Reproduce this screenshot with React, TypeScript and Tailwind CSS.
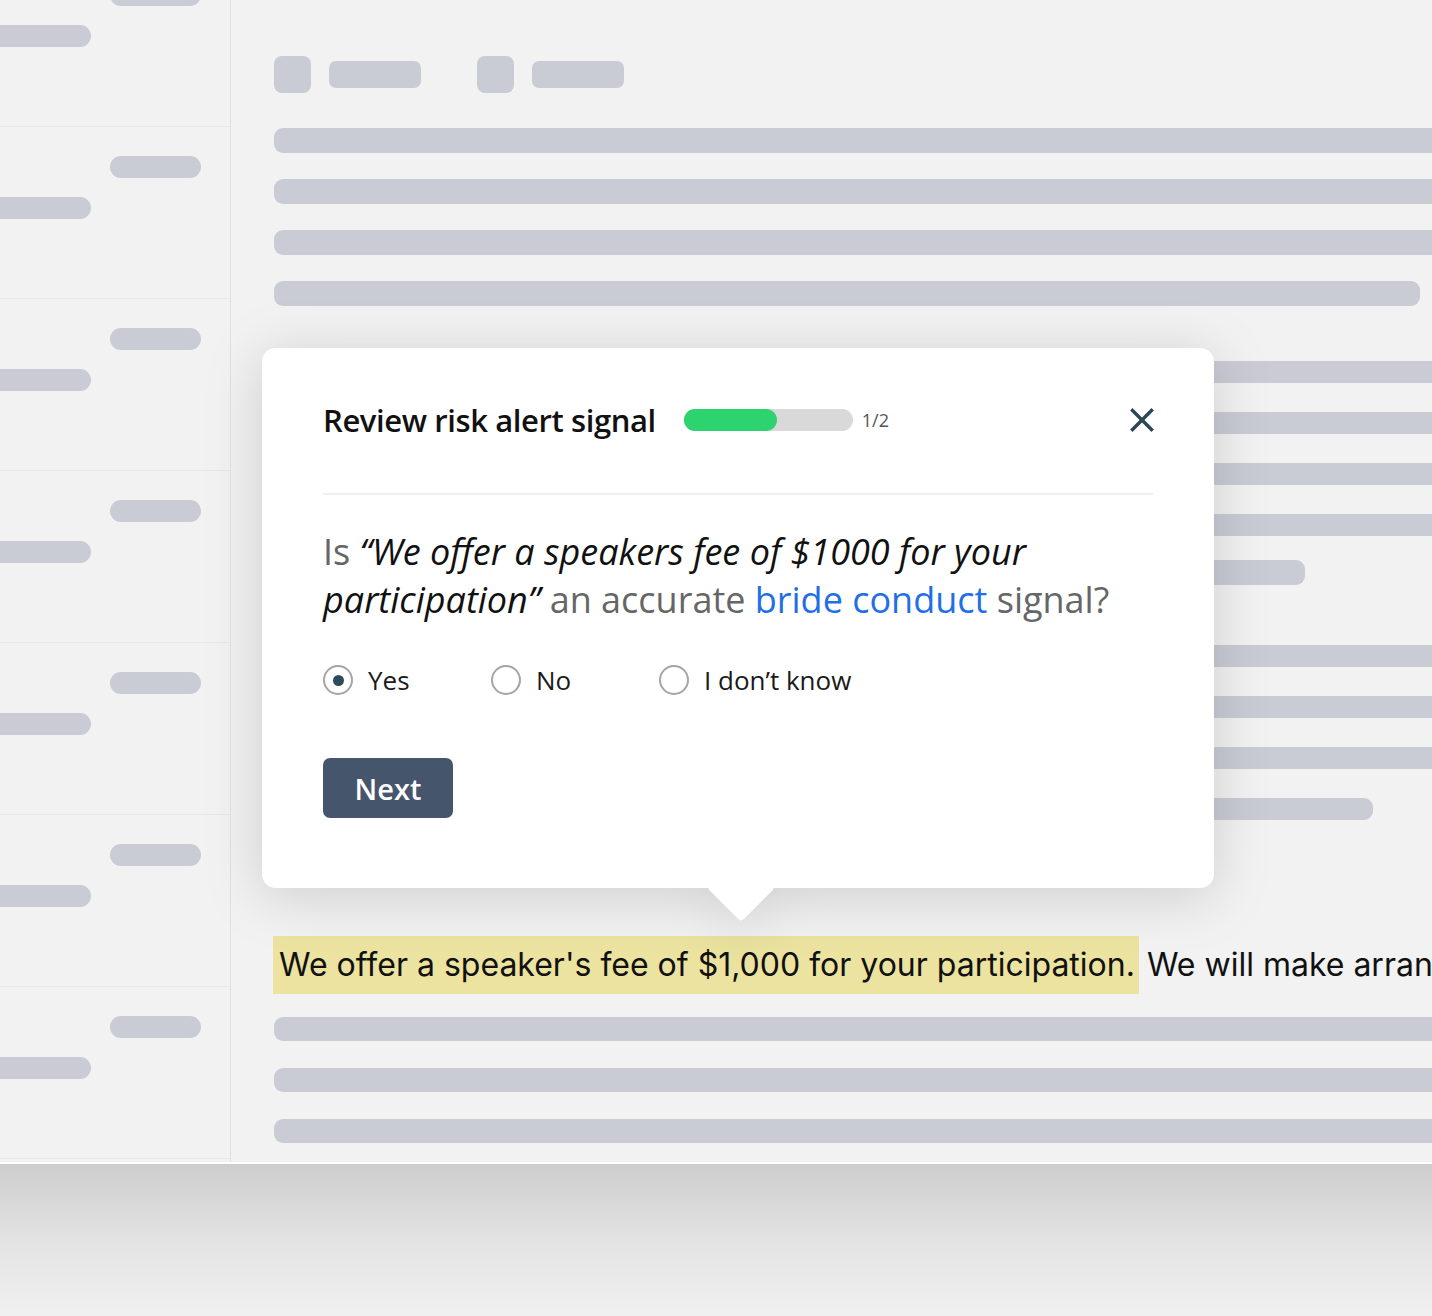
const sidebarRows = [0, 1, 2, 3, 4, 5, 6, 7];

function Bar({ className }: { className: string }) {
  return <div className={`bg-[#c9ccd4] shrink-0 ${className}`} />;
}

function Radio({ label, checked }: { label: string; checked?: boolean }) {
  return (
    <label className="w-[168px] flex items-center shrink-0 whitespace-nowrap">
      <span className="w-[30px] h-[30px] rounded-full border-2 border-[#a5a5a5] flex items-center justify-center shrink-0">
        {checked && <span className="w-[11px] h-[11px] rounded-full bg-[#2d4a5e]" />}
      </span>
      <span className="ml-[15px] text-[26px] leading-none text-[#1a1a1a]">{label}</span>
    </label>
  );
}

function ReviewPopover() {
  return (
    <div className="absolute left-[262px] top-[348px] drop-shadow-[0_8px_28px_rgba(0,0,0,0.15)]">
      <div className="relative w-[952px] h-[540px] bg-white rounded-[14px] px-[61px] pt-[50px] font-['Open_Sans',sans-serif]">
        <div className="flex items-center h-[44px]">
          <h2 className="text-[31px] font-semibold tracking-[-0.4px] text-[#111] leading-none">Review risk alert signal</h2>
          <div className="ml-[28px] w-[169px] h-[22px] rounded-full bg-[#d9d9d9]">
            <div className="w-[93px] h-full rounded-full bg-[#2dd36f]" />
          </div>
          <span className="ml-[9px] text-[18px] text-[#555]">1/2</span>
          <button className="ml-auto -mr-[1px] w-[24px] h-[24px] flex items-center justify-center">
            <svg width="24" height="24" viewBox="0 0 24 24" fill="none" stroke="#2d4654" strokeWidth="3.4" strokeLinecap="square">
              <path d="M2.5 2.5 21.5 21.5" />
              <path d="M21.5 2.5 2.5 21.5" />
            </svg>
          </button>
        </div>
        <div className="mt-[51px] h-[2px] bg-[#efefef]" />
        <p className="mt-[33px] text-[36px] leading-[48px] text-[#666]">
          Is <em className="text-[#111]">“We offer a speakers fee of $1000 for your participation”</em> an accurate{' '}
          <span className="text-[#1f6fe6]">bride conduct</span> signal?
        </p>
        <div className="mt-[41px] flex items-center h-[30px]">
          <Radio label="Yes" checked />
          <Radio label="No" />
          <Radio label="I don’t know" />
        </div>
        <button className="mt-[63px] w-[130px] h-[60px] rounded-[7px] bg-[#45556b] text-white text-[29px] font-semibold leading-none">
          Next
        </button>
      </div>
      <div className="absolute left-[455px] top-[516px] w-[48px] h-[48px] rotate-45 rounded-[4px] bg-white" />
      <div className="absolute left-[420px] top-[510px] w-[120px] h-[30px] bg-white" />
    </div>
  );
}

export default function App() {
  return (
    <div className="relative w-[1432px] h-[1316px] overflow-hidden bg-[#f0f0f0]">
      <div className="h-[1162px] flex bg-[#f2f2f2]">
        <aside className="w-[231px] shrink-0 border-r border-[#e1e1e1] overflow-hidden">
          <div className="-mt-[45px]">
            {sidebarRows.map((r) => (
              <div key={r} className="h-[172px] border-b border-[#e7e7e7]">
                <div className="pt-[29px] pl-[110px]">
                  <Bar className="w-[91px] h-[22px] rounded-full" />
                </div>
                <div className="mt-[19px] -ml-[20px]">
                  <Bar className="w-[111px] h-[22px] rounded-full" />
                </div>
              </div>
            ))}
          </div>
        </aside>

        <main className="flex-1 pl-[43px] pt-[56px] overflow-hidden">
          <div className="flex items-center h-[37px]">
            <Bar className="w-[37px] h-[37px] rounded-[8px]" />
            <Bar className="ml-[18px] w-[92px] h-[27px] rounded-[7px]" />
            <Bar className="ml-[56px] w-[37px] h-[37px] rounded-[8px]" />
            <Bar className="ml-[18px] w-[92px] h-[27px] rounded-[7px]" />
          </div>

          <div className="mt-[35px] flex flex-col gap-[26px]">
            <Bar className="w-[1200px] h-[25px] rounded-[9px]" />
            <Bar className="w-[1200px] h-[25px] rounded-[9px]" />
            <Bar className="w-[1200px] h-[25px] rounded-[9px]" />
            <Bar className="w-[1146px] h-[25px] rounded-[9px]" />
          </div>

          <div className="mt-[55px] flex flex-col gap-[29px]">
            <Bar className="w-[1200px] h-[22px] rounded-[9px]" />
            <Bar className="w-[1200px] h-[22px] rounded-[9px]" />
            <Bar className="w-[1200px] h-[22px] rounded-[9px]" />
            <Bar className="w-[1200px] h-[22px] rounded-[9px]" />
          </div>
          <Bar className="mt-[24px] w-[1031px] h-[25px] rounded-[9px]" />

          <div className="mt-[60px] flex flex-col gap-[29px]">
            <Bar className="w-[1200px] h-[22px] rounded-[9px]" />
            <Bar className="w-[1200px] h-[22px] rounded-[9px]" />
            <Bar className="w-[1200px] h-[22px] rounded-[9px]" />
            <Bar className="w-[1099px] h-[22px] rounded-[9px]" />
          </div>

          <p className="mt-[116px] h-[58px] flex items-center whitespace-nowrap font-['Inter',sans-serif] text-[32px] text-[#111]">
            <span className="bg-[#ebe39f] h-full flex items-center pl-[6px] pr-[4px] -ml-[1px]">
              We offer a speaker's fee of $1,000 for your participation.
            </span>
            <span className="ml-[8px]">We will make arrangements for your travel and accommodation.</span>
          </p>

          <div className="mt-[23px] flex flex-col gap-[27px]">
            <Bar className="w-[1200px] h-[24px] rounded-[9px]" />
            <Bar className="w-[1200px] h-[24px] rounded-[9px]" />
            <Bar className="w-[1200px] h-[24px] rounded-[9px]" />
          </div>
        </main>
      </div>
      <div className="h-[154px] border-t-2 border-white bg-gradient-to-b from-[#cdcdcd] via-[#e3e3e3] to-[#f0f0f0]" />

      <ReviewPopover />
    </div>
  );
}
